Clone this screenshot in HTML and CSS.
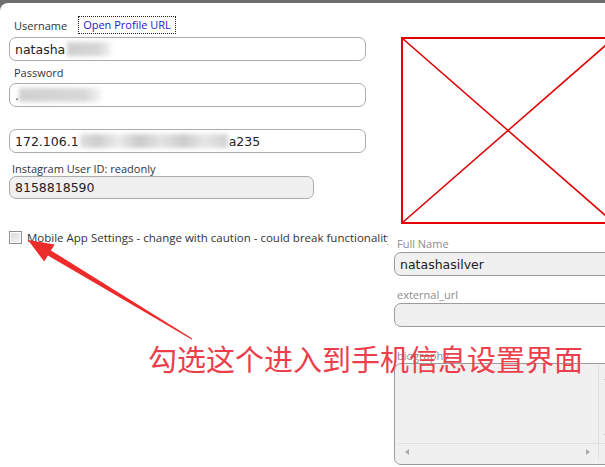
FILE: index.html
```html
<!DOCTYPE html>
<html lang="en">
<head>
    <meta charset="UTF-8">
    <meta name="viewport" content="width=device-width, initial-scale=1.0">
    <title>Profile Settings</title>
    <link rel="stylesheet" href="styles.css">
</head>
<body>
    <div class="panel">
        <div class="left">
            <div class="label-row">
                <span class="label">Username</span>
                <a class="profile-link" href="#">Open Profile URL</a>
            </div>
            <div class="field">natasha<span class="smudge s1"></span></div>
            <div class="label pw-label">Password</div>
            <div class="field">.<span class="smudge s2"></span></div>
            <div class="field ip-field">172.106.1<span class="smudge s3"></span>a235</div>
            <div class="label id-label">Instagram User ID: readonly</div>
            <div class="field readonly short">8158818590</div>
            <label class="mobile">
                <span class="check"></span>
                <span class="mobile-text">Mobile App Settings - change with caution - could break functionality</span>
            </label>
        </div>
        <div class="right">
            <div class="avatar">
                <svg width="214" height="187" viewBox="0 0 214 187">
                    <rect x="1" y="1" width="212" height="185" fill="none" stroke="#e60000" stroke-width="2"/>
                    <line x1="1" y1="1" x2="213" y2="186" stroke="#e00000" stroke-width="1.6"/>
                    <line x1="1" y1="186" x2="213" y2="1" stroke="#e00000" stroke-width="1.6"/>
                </svg>
            </div>
            <div class="label muted fn-label">Full Name</div>
            <div class="field readonly wide">natashasilver</div>
            <div class="label muted url-label">external_url</div>
            <div class="field readonly wide"></div>
            <div class="label muted bio-label">biography</div>
            <div class="bio">
                <div class="bio-text"></div>
                <div class="vbar">
                    <span class="tri up"></span>
                    <span class="tri down"></span>
                </div>
                <div class="hbar">
                    <span class="tri lefty"></span>
                    <span class="tri righty"></span>
                </div>
                <div class="corner"></div>
            </div>
        </div>
    </div>

    <!-- annotation -->
    <svg class="arrow" width="605" height="467" viewBox="0 0 605 467">
        <polygon fill="#ee2b2b" points="28,240 54.6,244.4 50.9,250.4 192.3,338.5 191.7,339.5 47.9,255.6 44.2,261.6"/>
    </svg>
    <div class="note">勾选这个进入到手机信息设置界面</div>
</body>
</html>
```

FILE: styles.css
```css
body {
    margin: 0;
    background: #6e6e6e;
    overflow: hidden;
    width: 605px;
    height: 467px;
    position: relative;
    font-family: 'Open Sans', sans-serif;
}
.panel {
    margin-top: 3px;
    height: 464px;
    background: white;
    border-top-left-radius: 8px;
    display: flex;
    padding-top: 13px;
    box-sizing: border-box;
}
.left {
    width: 388px;
    flex-shrink: 0;
    padding-left: 9px;
    box-sizing: border-box;
    overflow: hidden;
}
.right {
    width: 230px;
    flex-shrink: 0;
    padding-left: 6px;
    box-sizing: border-box;
}
.label {
    font-size: 11px;
    line-height: 15px;
    color: #2e3440;
    padding-left: 5px;
}
.label-row {
    display: flex;
    align-items: center;
    height: 18px;
}
.profile-link {
    margin-left: 11px;
    padding: 0 4px;
    font-size: 11px;
    line-height: 16px;
    color: #1a1acc;
    text-decoration: none;
    border: 1px dotted #222;
}
.field {
    height: 24px;
    width: 357px;
    box-sizing: border-box;
    border: 1px solid #ababab;
    border-radius: 7px;
    background: white;
    margin-top: 3px;
    padding-left: 5px;
    display: flex;
    align-items: center;
    font-family: 'DejaVu Sans', sans-serif;
    font-size: 12.5px;
    color: #222;
    white-space: nowrap;
}
.readonly {
    background: #f0f0f0;
}
.short {
    width: 305px;
    height: 23px;
    margin-top: 0;
}
.wide {
    width: 222px;
    margin-top: 1px;
    border-color: #9c9c9c;
}
.pw-label {
    margin-top: 4px;
}
.ip-field {
    margin-top: 22px;
}
.id-label {
    margin-top: 8px;
    padding-left: 3px;
}
.smudge {
    display: inline-block;
    height: 14px;
    filter: blur(2px);
}
.s1 {
    width: 44px;
    margin-left: 2px;
    background: linear-gradient(to right, #cfcfcf 0%, #d6d6d6 70%, #f2f2f2 100%);
}
.s2 {
    width: 82px;
    background: linear-gradient(to right, #d0d0d0 0%, #d8d8d8 80%, #f4f4f4 100%);
}
.s3 {
    width: 148px;
    margin: 0 1px;
    background: linear-gradient(to right, #e0e0e0 0%, #cdcdcd 12%, #ececec 26%, #c9c9c9 40%, #e4e4e4 55%, #cbcbcb 70%, #e6e6e6 84%, #d2d2d2 100%);
}
.mobile {
    display: flex;
    align-items: center;
    margin-top: 31px;
    white-space: nowrap;
}
.check {
    width: 11px;
    height: 11px;
    flex-shrink: 0;
    border: 1px solid #8e8f8f;
    background: linear-gradient(to bottom right, #d8d8d8, #f6f6f6);
    box-shadow: inset 0 0 0 1px #fdfdfd;
    margin-right: 5px;
}
.mobile-text {
    font-size: 11.5px;
    color: #333;
    line-height: 15px;
}
.avatar {
    margin-top: 21px;
    margin-left: 7px;
    height: 187px;
}
.avatar svg {
    display: block;
}
.muted {
    color: #8d8d8d;
    padding-left: 3px;
}
.fn-label {
    margin-top: 12px;
}
.url-label {
    margin-top: 11px;
}
.bio-label {
    margin-top: 21px;
}
.bio {
    width: 222px;
    height: 102px;
    box-sizing: border-box;
    border: 1px solid #9c9c9c;
    border-radius: 7px;
    background: #f0f0f0;
    display: grid;
    grid-template-columns: 1fr 17px;
    grid-template-rows: 1fr 17px;
    padding: 1px 0 4px 3px;
}
.vbar {
    border-left: 1px solid #dedede;
    display: flex;
    flex-direction: column;
    align-items: center;
    justify-content: space-between;
    padding: 11px 0 5px;
}
.hbar {
    border-top: 1px solid #dedede;
    display: flex;
    align-items: center;
    justify-content: space-between;
    padding: 0 8px 0 7px;
}
.corner {
    border-top: 1px solid #dedede;
    border-left: 1px solid #dedede;
}
.tri {
    width: 0;
    height: 0;
    border: 3px solid transparent;
}
.up {
    border-bottom: 4px solid #a8a8a8;
    border-top-width: 0;
}
.down {
    border-top: 4px solid #a8a8a8;
    border-bottom-width: 0;
}
.lefty {
    border-right: 4px solid #a8a8a8;
    border-left-width: 0;
}
.righty {
    border-left: 4px solid #a8a8a8;
    border-right-width: 0;
}
.arrow {
    position: absolute;
    top: 0;
    left: 0;
    pointer-events: none;
}
.note {
    position: absolute;
    left: 148px;
    top: 344px;
    font-family: 'Noto Sans CJK SC', sans-serif;
    font-size: 29px;
    line-height: 29px;
    color: #ec3f4c;
    white-space: nowrap;
}
```
